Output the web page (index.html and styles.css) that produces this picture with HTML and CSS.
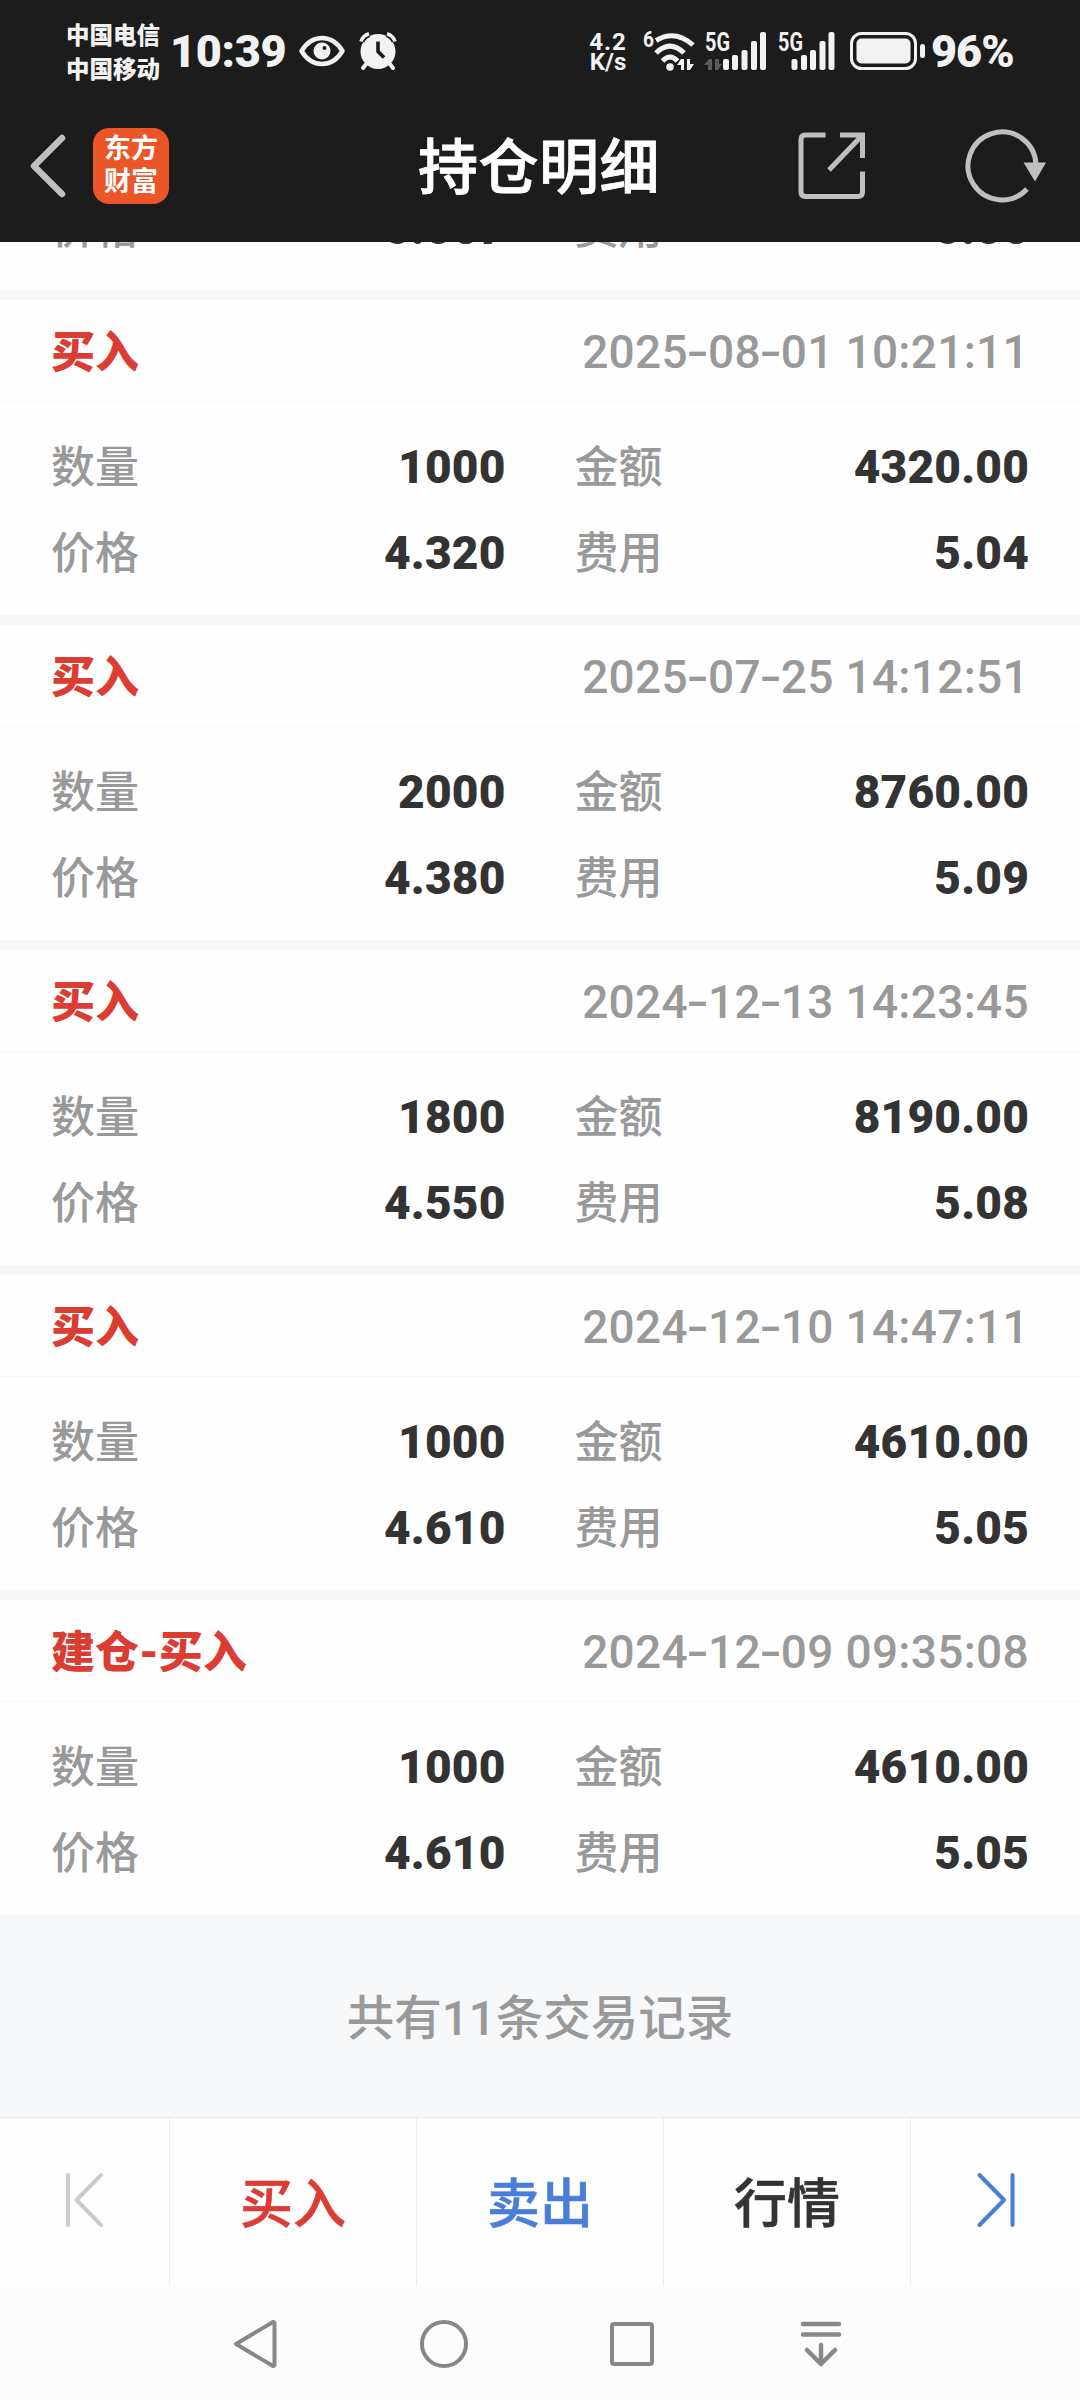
FILE: index.html
```html
<!DOCTYPE html>
<html lang="zh-CN">
<head>
    <meta charset="UTF-8">
    <meta name="viewport" content="width=device-width, initial-scale=1.0">
    <title>持仓明细</title>
    <link rel="stylesheet" href="styles.css">
</head>
<body>
    <div class="header">
        <div class="status-bar">
            <div class="carrier">
                <div>中国电信</div>
                <div>中国移动</div>
            </div>
            <div class="time">10:39</div>
            <svg class="icon-eye" width="46" height="32" viewBox="0 0 46 32">
                <path d="M2.5 16C8 7 15 3 23 3s15 4 20.500 13C38 25 31 29 23 29S8 25 2.500 16z" fill="none" stroke="#f2f2f2" stroke-width="4.500" stroke-linejoin="round"/>
                <circle cx="23" cy="16" r="8.500" fill="#f2f2f2"/>
                <circle cx="25.500" cy="13" r="2" fill="#1c1c1c"/>
            </svg>
            <svg class="icon-alarm" width="38" height="38" viewBox="0 0 38 38">
                <circle cx="19" cy="19.500" r="17.500" fill="#f2f2f2"/>
                <path d="M2 9.500Q4 3.500 10 1.800M36 9.500Q34 3.500 28 1.800" fill="none" stroke="#1c1c1c" stroke-width="7"/>
                <path d="M2 9.500Q4 3.500 10 1.800M36 9.500Q34 3.500 28 1.800" fill="none" stroke="#f2f2f2" stroke-width="3.600"/>
                <path d="M8 31l-4 5M30 31l4 5" stroke="#f2f2f2" stroke-width="4" stroke-linecap="round"/>
                <path d="M19 9.500v10l6 6" fill="none" stroke="#1c1c1c" stroke-width="3.600"/>
            </svg>
            <div class="speed">
                <div>4.2</div>
                <div>K/s</div>
            </div>
            <svg class="icon-wifi" width="52" height="42" viewBox="0 0 52 42">
                <text x="0" y="17" class="svg-text" font-size="22" textLength="11" lengthAdjust="spacingAndGlyphs">6</text>
                <g fill="none" stroke="#f2f2f2" stroke-width="5">
                    <path d="M13 10.500Q32 -1 50 15"/>
                    <path d="M13 23Q27 9 41 23"/>
                    <path d="M19.500 31Q27 23 34.500 31"/>
                </g>
                <circle cx="27" cy="37" r="3.800" fill="#f2f2f2"/>
                <path d="M34 35l4-6h3v11h-3v-5zM44 29h3v5h4l-4 6h-3z" fill="#f2f2f2"/>
            </svg>
            <svg class="icon-signal" width="62" height="40" viewBox="0 0 62 40">
                <text x="1" y="20" class="svg-text" font-size="26" textLength="25" lengthAdjust="spacingAndGlyphs">5G</text>
                <path d="M0 34l5-6h3v11H4v-5zM11 28h4v5h3l-4 6h-3z" fill="#5c5c5c"/>
                <g fill="#f2f2f2">
                    <rect x="19" y="28" width="6" height="11" rx="2"/>
                    <rect x="28" y="24" width="6" height="15" rx="2"/>
                    <rect x="37.500" y="19" width="6" height="20" rx="2"/>
                    <rect x="47" y="10" width="6" height="29" rx="2"/>
                    <rect x="56" y="1" width="6" height="38" rx="2"/>
                </g>
            </svg>
            <svg class="icon-signal2" width="57" height="40" viewBox="0 0 57 40">
                <text x="0" y="20" class="svg-text" font-size="26" textLength="25" lengthAdjust="spacingAndGlyphs">5G</text>
                <g fill="#f2f2f2">
                    <rect x="13.500" y="28" width="6" height="11" rx="2"/>
                    <rect x="23" y="24" width="6" height="15" rx="2"/>
                    <rect x="32" y="19" width="6" height="20" rx="2"/>
                    <rect x="41.500" y="10" width="6" height="29" rx="2"/>
                    <rect x="50.500" y="1" width="6" height="38" rx="2"/>
                </g>
            </svg>
            <svg class="icon-battery" width="76" height="38" viewBox="0 0 76 38">
                <rect x="1.500" y="1.500" width="64" height="35" rx="10" fill="none" stroke="#f2f2f2" stroke-width="3"/>
                <rect x="6.500" y="6.500" width="54" height="25" rx="5" fill="#f2f2f2"/>
                <rect x="70" y="12" width="5" height="14" rx="2.500" fill="#f2f2f2"/>
            </svg>
            <div class="percent">96%</div>
        </div>
        <div class="title-bar">
            <svg class="icon-back" width="38" height="64" viewBox="0 0 38 64">
                <path d="M33 4L5 32l28 28" fill="none" stroke="#bfbfbf" stroke-width="6.500" stroke-linecap="round" stroke-linejoin="round"/>
            </svg>
            <div class="logo">
                <div>东方</div>
                <div>财富</div>
            </div>
            <h1>持仓明细</h1>
            <svg class="icon-share" width="68" height="70" viewBox="0 0 68 70">
                <g fill="none" stroke="#bfbfbf" stroke-width="5">
                    <path d="M27.500 4H7.500Q3 4 3 8.500V61q0 4.500 4.500 4.500H60q4.500 0 4.500-4.500V40.500"/>
                    <path d="M42 4h22.500v23M64 4.500L31 39"/>
                </g>
            </svg>
            <svg class="icon-refresh" width="82" height="74" viewBox="0 0 82 74">
                <path d="M71 35A34 34 0 1 0 62 60" fill="none" stroke="#bfbfbf" stroke-width="5"/>
                <path d="M58.500 33.500h22.500l-11 19z" fill="#bfbfbf"/>
            </svg>
        </div>
    </div>

    <div class="list">
        <div class="card">
            <div class="card-body">
                <span class="label">价格</span><span class="value">5.567</span><span class="label">费用</span><span class="value">5.06</span>
            </div>
        </div>
        <div class="card">
            <div class="card-head"><span class="type">买入</span><span class="date">2025<i>-</i>08<i>-</i>01 10:21:11</span></div>
            <div class="card-body">
                <span class="label">数量</span><span class="value">1000</span><span class="label">金额</span><span class="value">4320.00</span>
                <span class="label">价格</span><span class="value">4.320</span><span class="label">费用</span><span class="value">5.04</span>
            </div>
        </div>
        <div class="card">
            <div class="card-head"><span class="type">买入</span><span class="date">2025<i>-</i>07<i>-</i>25 14:12:51</span></div>
            <div class="card-body">
                <span class="label">数量</span><span class="value">2000</span><span class="label">金额</span><span class="value">8760.00</span>
                <span class="label">价格</span><span class="value">4.380</span><span class="label">费用</span><span class="value">5.09</span>
            </div>
        </div>
        <div class="card">
            <div class="card-head"><span class="type">买入</span><span class="date">2024<i>-</i>12<i>-</i>13 14:23:45</span></div>
            <div class="card-body">
                <span class="label">数量</span><span class="value">1800</span><span class="label">金额</span><span class="value">8190.00</span>
                <span class="label">价格</span><span class="value">4.550</span><span class="label">费用</span><span class="value">5.08</span>
            </div>
        </div>
        <div class="card">
            <div class="card-head"><span class="type">买入</span><span class="date">2024<i>-</i>12<i>-</i>10 14:47:11</span></div>
            <div class="card-body">
                <span class="label">数量</span><span class="value">1000</span><span class="label">金额</span><span class="value">4610.00</span>
                <span class="label">价格</span><span class="value">4.610</span><span class="label">费用</span><span class="value">5.05</span>
            </div>
        </div>
        <div class="card">
            <div class="card-head"><span class="type">建仓-买入</span><span class="date">2024<i>-</i>12<i>-</i>09 09:35:08</span></div>
            <div class="card-body">
                <span class="label">数量</span><span class="value">1000</span><span class="label">金额</span><span class="value">4610.00</span>
                <span class="label">价格</span><span class="value">4.610</span><span class="label">费用</span><span class="value">5.05</span>
            </div>
        </div>
        <div class="total">共有11条交易记录</div>
    </div>

    <div class="tab-bar">
        <div class="tab prev">
            <svg width="40" height="56" viewBox="0 0 40 56">
                <path d="M3 3v50M36 3L11.500 28 36 53" fill="none" stroke="#cccccc" stroke-width="4" stroke-linecap="round" stroke-linejoin="round"/>
            </svg>
        </div>
        <div class="tab buy">买入</div>
        <div class="tab sell">卖出</div>
        <div class="tab">行情</div>
        <div class="tab next">
            <svg width="40" height="56" viewBox="0 0 40 56">
                <path d="M36.500 3v50M3.500 3L28 28 3.500 53" fill="none" stroke="#4a7dd3" stroke-width="4" stroke-linecap="round" stroke-linejoin="round"/>
            </svg>
        </div>
    </div>

    <div class="nav-bar">
        <div class="nav-item">
            <svg width="50" height="50" viewBox="0 0 50 50">
                <path d="M43 3L6 25l37 22q1.500 0 1.500-2V5q0-2-1.500-2z" fill="none" stroke="#888888" stroke-width="4" stroke-linejoin="round"/>
            </svg>
        </div>
        <div class="nav-item">
            <svg width="50" height="50" viewBox="0 0 50 50">
                <circle cx="25" cy="25" r="22" fill="none" stroke="#888888" stroke-width="4"/>
            </svg>
        </div>
        <div class="nav-item">
            <svg width="50" height="50" viewBox="0 0 50 50">
                <rect x="5" y="5" width="40" height="40" rx="2" fill="none" stroke="#888888" stroke-width="4"/>
            </svg>
        </div>
        <div class="nav-item">
            <svg width="50" height="50" viewBox="0 0 50 50">
                <path d="M7 5h36M7 15.500h36M25 26v19M11 31l14 14 14-14" fill="none" stroke="#888888" stroke-width="4.500" stroke-linecap="round" stroke-linejoin="round"/>
            </svg>
        </div>
    </div>
</body>
</html>
```

FILE: styles.css
```css
* {
    box-sizing: border-box;
}
body {
    margin: 0;
    height: 2400px;
    display: flex;
    flex-direction: column;
    overflow: hidden;
    background-color: #f6f8fa;
    font-family: Roboto, "Noto Sans CJK SC", sans-serif;
    color: #333333;
}
svg {
    display: block;
    flex-shrink: 0;
    overflow: visible;
}

/* 顶部 */
.header {
    height: 242px;
    flex-shrink: 0;
    background-color: #1c1c1c;
}
.status-bar {
    height: 102px;
    display: flex;
    align-items: center;
    color: #f2f2f2;
    font-weight: 700;
}
.carrier {
    width: 95px;
    margin-left: 66px;
    margin-top: 4px;
    font-size: 23.5px;
    line-height: 34px;
    font-weight: 900;
}
.time {
    width: 117px;
    margin-left: 9px;
    margin-top: 2px;
    font-size: 45px;
    line-height: 50px;
    font-weight: 900;
    letter-spacing: -0.3px;
}
.icon-eye {
    margin-left: 12px;
}
.icon-alarm {
    margin-left: 14px;
}
.speed {
    width: 42px;
    margin-left: 190px;
    margin-right: 14px;
    margin-top: 2px;
    font-size: 24px;
    line-height: 20px;
    text-align: center;
}
.speed div:first-child {
    letter-spacing: 1px;
}
.svg-text {
    fill: #f2f2f2;
    font-weight: 700;
}
.icon-signal {
    margin-left: 9px;
}
.icon-signal2 {
    margin-left: 12px;
}
.icon-battery {
    margin-left: 15px;
}
.percent {
    margin-left: 5px;
    margin-top: 2px;
    font-size: 45px;
    line-height: 50px;
    font-weight: 900;
    letter-spacing: -1px;
}
.title-bar {
    height: 128px;
    display: flex;
    align-items: center;
}
.icon-back {
    margin-left: 29px;
}
.logo {
    width: 76px;
    height: 76px;
    margin-left: 26px;
    padding-top: 5px;
    border-radius: 16px;
    background-color: #eb5528;
    color: #ffffff;
    font-size: 27px;
    line-height: 33px;
    font-weight: 700;
    text-align: center;
}
h1 {
    width: 244px;
    margin: 5px 0 0 249px;
    color: #ffffff;
    font-size: 60px;
    line-height: 72px;
    font-weight: 500;
    letter-spacing: 0.5px;
    white-space: nowrap;
    -webkit-text-stroke: 0.8px #ffffff;
}
.icon-share {
    margin-left: 136px;
}
.icon-refresh {
    margin-left: 99px;
}

/* 交易记录 */
.list {
    height: 1875px;
    display: flex;
    flex-direction: column;
    justify-content: flex-end;
    overflow: hidden;
}
.card {
    height: 315px;
    margin-bottom: 10px;
    flex-shrink: 0;
    background-color: #fefefe;
}
.card:nth-last-child(2) {
    margin-bottom: 0;
}
.card-head {
    height: 102px;
    padding: 0 51px;
    display: flex;
    justify-content: space-between;
    align-items: center;
    border-bottom: 1px solid #f6f7f9;
}
.type {
    margin-top: -3px;
    color: #db3d33;
    font-size: 44px;
    font-weight: 900;
}
.date {
    margin-top: 2px;
    color: #999999;
    font-size: 46px;
    font-weight: 500;
    letter-spacing: 0.3px;
}
.date i {
    display: inline-block;
    width: 20px;
    font-style: normal;
    text-align: center;
    transform: scaleX(1.4);
}
.card-body {
    padding: 22px 51px 0;
    display: grid;
    grid-template-columns: 100px 354.5px 167.5px 1fr;
    grid-auto-rows: 86px;
    align-items: center;
}
/* 第一条只露出最后一行 */
.card:first-child {
    height: 105px;
}
.card:first-child .card-body {
    padding-top: 0;
}
.label {
    margin-top: -6px;
    color: #999999;
    font-size: 44px;
    font-weight: 500;
}
.label:nth-child(4n + 3) {
    padding-left: 69px;
}
.value {
    font-size: 46px;
    font-weight: 900;
    letter-spacing: 0.2px;
    text-align: right;
}
.total {
    height: 202px;
    padding-bottom: 3px;
    flex-shrink: 0;
    display: flex;
    justify-content: center;
    align-items: center;
    color: #999999;
    font-size: 47.5px;
    font-weight: 500;
}

/* 底部 */
.tab-bar {
    height: 169px;
    flex-shrink: 0;
    display: grid;
    grid-template-columns: 170px 247px 247px 247px 169px;
    border-top: 1px solid #e9ebee;
    background-color: #fefefe;
}
.tab {
    padding-bottom: 4px;
    display: flex;
    justify-content: center;
    align-items: center;
    border-right: 1px solid #ececec;
    font-size: 53px;
    font-weight: 500;
    -webkit-text-stroke: 0.6px;
}
.tab:last-child {
    border-right: none;
}
.buy {
    color: #db3d33;
}
.sell {
    color: #4a7dd8;
}
.nav-bar {
    height: 114px;
    padding-top: 2px;
    padding-left: 161px;
    display: flex;
    align-items: center;
    background-color: #fcfcfc;
}
.nav-item {
    width: 188.5px;
    display: flex;
    justify-content: center;
}
```
